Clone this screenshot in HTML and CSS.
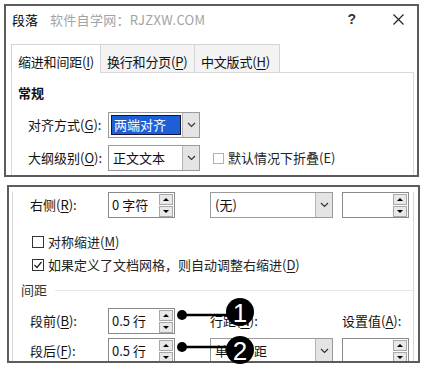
FILE: index.html
```html
<!DOCTYPE html>
<html lang="zh-CN">
<head>
    <meta charset="UTF-8">
    <title>段落</title>
    <link rel="stylesheet" href="styles.css">
</head>
<body>
<!--上半部分：标题栏、选项卡、常规-->
<div class="shot shot-top">
    <div class="titlebar">
        <span class="title">段落</span>
        <span class="brand">软件自学网：RJZXW.COM</span>
        <span class="help">?</span>
        <span class="close">
            <svg width="11" height="11" viewBox="0 0 11 11"><path d="M0.5 0.5L10.5 10.5M10.5 0.5L0.5 10.5" stroke="#222" stroke-width="1.2" fill="none"/></svg>
        </span>
    </div>
    <ul class="tabs">
        <li class="current tab1">缩进和间距(<u>I</u>)</li>
        <li class="tab2">换行和分页(<u>P</u>)</li>
        <li class="tab3">中文版式(<u>H</u>)</li>
    </ul>
    <div class="page">
        <div class="group bold">常规</div>
        <div class="row">
            <span class="lbl">对齐方式(<u>G</u>):</span>
            <div class="select sel-s">
                <span class="value picked">两端对齐</span>
                <span class="drop"><svg width="9" height="6" viewBox="0 0 9 6"><polyline points="1,1 4.5,4.5 8,1" stroke="#333" stroke-width="1.2" fill="none"/></svg></span>
            </div>
        </div>
        <div class="row row2">
            <span class="lbl">大纲级别(<u>O</u>):</span>
            <div class="select sel-s">
                <span class="value">正文文本</span>
                <span class="drop"><svg width="9" height="6" viewBox="0 0 9 6"><polyline points="1,1 4.5,4.5 8,1" stroke="#333" stroke-width="1.2" fill="none"/></svg></span>
            </div>
            <span class="box faded"></span>
            <span class="box-text">默认情况下折叠(E)</span>
        </div>
    </div>
</div>

<!--下半部分：右侧缩进、间距-->
<div class="shot shot-bottom">
    <div class="page2">
        <div class="grid first">
            <span class="lbl">右侧(<u>R</u>):</span>
            <div class="spin">
                <span class="num">0 字符</span>
                <span class="arrows"><i class="up"></i><i class="down"></i></span>
            </div>
            <div class="select sel-l">
                <span class="value">(无)</span>
                <span class="drop"><svg width="9" height="6" viewBox="0 0 9 6"><polyline points="1,1 4.5,4.5 8,1" stroke="#333" stroke-width="1.2" fill="none"/></svg></span>
            </div>
            <div class="spin">
                <span class="num"></span>
                <span class="arrows"><i class="up"></i><i class="down"></i></span>
            </div>
        </div>
        <div class="check-row c1">
            <span class="box"></span>
            <span class="box-text">对称缩进(<u>M</u>)</span>
        </div>
        <div class="check-row c2">
            <span class="box checked"><svg width="10" height="10" viewBox="0 0 10 10"><polyline points="1.5,5 4,7.5 8.5,2" stroke="#222" stroke-width="1.3" fill="none"/></svg></span>
            <span class="box-text">如果定义了文档网格，则自动调整右缩进(<u>D</u>)</span>
        </div>
        <div class="group group-line">间距</div>
        <div class="grid before">
            <span class="lbl">段前(<u>B</u>):</span>
            <div class="spin">
                <span class="num">0.5 行</span>
                <span class="arrows"><i class="up"></i><i class="down"></i></span>
            </div>
            <span class="lbl">行距(<u>N</u>):</span>
            <span class="lbl">设置值(<u>A</u>):</span>
        </div>
        <div class="grid after">
            <span class="lbl">段后(<u>F</u>):</span>
            <div class="spin">
                <span class="num">0.5 行</span>
                <span class="arrows"><i class="up"></i><i class="down"></i></span>
            </div>
            <div class="select sel-l">
                <span class="value">单倍行距</span>
                <span class="drop"><svg width="9" height="6" viewBox="0 0 9 6"><polyline points="1,1 4.5,4.5 8,1" stroke="#333" stroke-width="1.2" fill="none"/></svg></span>
            </div>
            <div class="spin">
                <span class="num"></span>
                <span class="arrows"><i class="up"></i><i class="down"></i></span>
            </div>
        </div>
    </div>
</div>

<!--标注：编号圆圈和引线，压在截图上面-->
<svg class="marks" width="427" height="368" viewBox="0 0 427 368">
    <line x1="182" y1="315" x2="232" y2="315" stroke="#000" stroke-width="2.5"/>
    <circle cx="182" cy="315" r="5" fill="#000"/>
    <circle cx="240" cy="312" r="14" fill="#000"/>
    <text x="240" y="321.5" class="mark-num">1</text>
    <line x1="182" y1="347" x2="232" y2="347" stroke="#000" stroke-width="2.5"/>
    <circle cx="182" cy="347" r="5" fill="#000"/>
    <circle cx="240" cy="350" r="14" fill="#000"/>
    <text x="240" y="359.5" class="mark-num">2</text>
</svg>
</body>
</html>
```

FILE: styles.css
```css
* {
    margin: 0;
    padding: 0;
    box-sizing: border-box;
}

body {
    width: 427px;
    height: 368px;
    position: relative;
    overflow: hidden;
    background-color: #fff;
    font-family: "Noto Sans CJK SC", "Microsoft YaHei", sans-serif;
    font-size: 13px;
    color: #111;
}

u {
    text-underline-offset: 2px;
}

.bold {
    font-weight: bold;
}

/*两块截图的外框*/
.shot {
    border: 2px solid #5c5c5c;
    background-color: #fff;
    overflow: hidden;
}

.shot-top {
    margin: 4px 0 0 4px;
    width: 415px;
    height: 173px;
}

.shot-bottom {
    margin: 8px 0 0 7px;
    width: 413px;
    height: 178px;
}

/*标题栏*/
.titlebar {
    height: 26px;
    display: flex;
    align-items: center;
    padding: 0 13px 0 6px;
}

.title {
    font-size: 13px;
    color: #000;
}

.brand {
    margin-left: 12px;
    font-size: 13px;
    letter-spacing: 0.3px;
    color: #a3a3a3;
}

.help {
    margin-left: auto;
    font-family: "Liberation Sans", sans-serif;
    font-weight: bold;
    font-size: 14px;
    color: #333;
}

.close {
    margin-left: 37px;
    display: flex;
}

/*选项卡*/
.tabs {
    list-style: none;
    display: flex;
    align-items: flex-end;
    margin: 12px 0 0 5px;
    height: 28px;
}

.tabs li {
    height: 28px;
    padding: 7px 0 1px 6px;
    line-height: 20px;
    white-space: nowrap;
    letter-spacing: -0.2px;
    border: 1px solid #d4d4d4;
    border-bottom: none;
    background-color: #f3f3f3;
    margin-left: -1px;
}

.tabs .tab1 { width: 90px; margin-left: 0; }
.tabs .tab2 { width: 95px; }
.tabs .tab3 { width: 86px; }

.tabs .current {
    background-color: #fff;
    height: 29px;
    margin-bottom: -1px;
    position: relative;
}

.page {
    margin-left: 5px;
    width: 403px;
    height: 120px;
    border: 1px solid #d9d9d9;
    padding-left: 6px;
}

.group {
    line-height: 18px;
    margin-top: 11px;
    color: #111;
}

.row {
    display: flex;
    align-items: center;
    height: 26px;
    margin-top: 10px;
    padding-left: 10px;
}

.row2 {
    margin-top: 7px;
}

.lbl {
    width: 80px;
    line-height: 18px;
    white-space: nowrap;
}

/*下拉框*/
.select {
    display: flex;
    height: 26px;
    border: 1px solid #9a9a9a;
    background-color: #fff;
    padding: 2px 0 2px 2px;
}

.sel-s {
    width: 92px;
}

.sel-l {
    width: 123px;
}

.value {
    flex: 1;
    line-height: 20px;
    padding-left: 2px;
    white-space: nowrap;
}

.picked {
    background-color: #1f5fd6;
    color: #fff;
    border: 1px solid #14143c;
    line-height: 18px;
    margin-right: 1px;
}

.drop {
    width: 17px;
    margin: -2px 0;
    background-color: #e4e4e4;
    border-left: 1px solid #b4b4b4;
    display: flex;
    align-items: center;
    justify-content: center;
}

/*复选框*/
.box {
    width: 12px;
    height: 12px;
    border: 1px solid #333;
    background-color: #fff;
    display: flex;
    align-items: center;
    justify-content: center;
}

.faded {
    margin-left: 13px;
    width: 11px;
    height: 11px;
    border-color: #b0b0b0;
}

.box-text {
    margin-left: 4px;
    line-height: 18px;
    color: #222;
    white-space: nowrap;
}

/*下半部分*/
.page2 {
    margin-left: 3px;
    width: 402px;
    height: 100%;
    border-left: 1px solid #d9d9d9;
    border-right: 1px solid #d9d9d9;
    padding-left: 8px;
}

.grid {
    display: grid;
    grid-template-columns: 78px 102px 132px 68px;
    align-items: center;
    height: 26px;
    margin-left: 9px;
}

.grid.first { margin-top: 5px; }
.grid.before { margin-top: 9px; }
.grid.after { margin-top: 4px; }

.spin {
    width: 67px;
    height: 26px;
    border: 1px solid #8a8a8a;
    display: flex;
    align-items: center;
    padding: 0 1px 0 3px;
}

.num {
    flex: 1;
    line-height: 18px;
    white-space: nowrap;
}

.arrows {
    display: flex;
    flex-direction: column;
    gap: 1px;
}

.arrows i {
    width: 14px;
    height: 11px;
    border: 1px solid #a8a8a8;
    background-color: #e8e8e8;
    display: flex;
    align-items: center;
    justify-content: center;
}

.arrows i::after {
    content: "";
    border-left: 3px solid transparent;
    border-right: 3px solid transparent;
}

.arrows .up::after {
    border-bottom: 3px solid #000;
}

.arrows .down::after {
    border-top: 3px solid #000;
}

.check-row {
    display: flex;
    align-items: center;
    height: 18px;
    margin-left: 11px;
}

.check-row.c1 { margin-top: 15px; }
.check-row.c2 { margin-top: 5px; }

.group-line {
    display: flex;
    align-items: center;
    margin-top: 7px;
    color: #333;
}

.group-line::after {
    content: "";
    flex: 1;
    height: 1px;
    margin-left: 8px;
    background-color: #e6e6e6;
}

/*编号标注*/
.marks {
    position: absolute;
    left: 0;
    top: 0;
}

.mark-num {
    font-family: "Liberation Sans", sans-serif;
    font-size: 26px;
    fill: #fff;
    text-anchor: middle;
}
```
